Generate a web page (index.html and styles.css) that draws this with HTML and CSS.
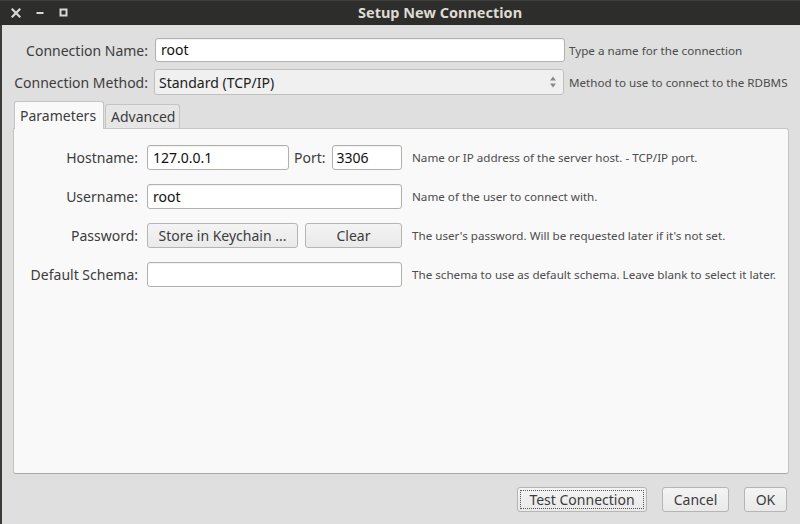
FILE: index.html
```html
<!DOCTYPE html>
<html>
<head>
<meta charset="utf-8">
<link rel="stylesheet" href="styles.css">
</head>
<body>
<div class="window">
  <div class="titlebar">
    <div class="controls">
      <svg class="ctl" width="10" height="10" viewBox="0 0 10 10"><path d="M1.5 1.5 L8.5 8.5 M8.5 1.5 L1.5 8.5" stroke="#d8d8d8" stroke-width="2.2" stroke-linecap="square"/></svg>
      <svg class="ctl" width="10" height="10" viewBox="0 0 10 10"><rect x="1.5" y="4" width="7" height="2" fill="#d8d8d8"/></svg>
      <svg class="ctl" width="10" height="10" viewBox="0 0 10 10"><rect x="1.5" y="1.5" width="6" height="6" fill="none" stroke="#d8d8d8" stroke-width="2"/></svg>
    </div>
    <div class="title">Setup New Connection</div>
  </div>
  <div class="content">
    <div class="topform">
      <label class="lbl">Connection Name:</label>
      <div class="input name-input">root</div>
      <span class="help">Type a name for the connection</span>
      <label class="lbl">Connection Method:</label>
      <div class="select">
        <span>Standard (TCP/IP)</span>
        <svg width="8" height="12" viewBox="0 0 8 12"><path d="M4 0.5 L7 4.5 L1 4.5 Z M4 11.5 L7 7.5 L1 7.5 Z" fill="#8a8a8a"/></svg>
      </div>
      <span class="help">Method to use to connect to the RDBMS</span>
    </div>
    <div class="tabs">
      <div class="tab active">Parameters</div>
      <div class="tab">Advanced</div>
    </div>
    <div class="panel">
      <div class="pform">
        <label class="plbl">Hostname:</label>
        <div class="fieldrow">
          <div class="input host">127.0.0.1</div>
          <span class="portlbl">Port:</span>
          <div class="input port">3306</div>
        </div>
        <span class="help">Name or IP address of the server host. - TCP/IP port.</span>

        <label class="plbl">Username:</label>
        <div class="fieldrow"><div class="input user">root</div></div>
        <span class="help">Name of the user to connect with.</span>

        <label class="plbl">Password:</label>
        <div class="fieldrow">
          <div class="btn keychain">Store in Keychain ...</div>
          <div class="btn clear">Clear</div>
        </div>
        <span class="help">The user's password. Will be requested later if it's not set.</span>

        <label class="plbl">Default Schema:</label>
        <div class="fieldrow"><div class="input user"></div></div>
        <span class="help">The schema to use as default schema. Leave blank to select it later.</span>
      </div>
    </div>
    <div class="actions">
      <div class="btn test"><span class="focus">Test Connection</span></div>
      <div class="btn cancel">Cancel</div>
      <div class="btn ok">OK</div>
    </div>
  </div>
</div>
</body>
</html>
```
FILE: styles.css
```css
* { box-sizing: border-box; }
html, body { margin: 0; padding: 0; }
body {
  width: 800px;
  height: 524px;
  overflow: hidden;
  background: #3c3b37;
  font-family: "Noto Sans", "DejaVu Sans", sans-serif;
  font-size: 14px;
  color: #3c3c3c;
}
.window { width: 800px; height: 524px; display: flex; flex-direction: column; }
.titlebar {
  height: 25px;
  flex: none;
  background: #2d2d2b;
  border-top: 1px solid #3e3e3b;
  display: flex;
  align-items: center;
  position: relative;
}
.controls { display: flex; align-items: center; padding-left: 11px; gap: 14px; margin-top: -1px; }
.ctl { display: block; }
.title {
  position: absolute;
  left: 358px;
  top: 1px;
  font-weight: bold;
  font-size: 14.5px;
  color: #dfdbd2;
}
.content {
  flex: 1;
  background: #dfdfdf;
  border-left: 2px solid #3c3b37;
  padding: 0 11px 0 11px;
  display: flex;
  flex-direction: column;
}
.topform {
  display: grid;
  grid-template-columns: 135px 410px auto;
  column-gap: 6px;
  row-gap: 7px;
  align-items: center;
  padding-top: 13px;
}
.lbl { text-align: right; white-space: nowrap; color: #3c3c3c; }
.input {
  height: 24px;
  background: #fff;
  border: 1px solid #b0b0ae;
  border-radius: 3px;
  padding: 0 5px;
  line-height: 22px;
  color: #101010;
  box-shadow: inset 0 1px 1px rgba(0,0,0,0.06);
}
.name-input { margin-left: 1px; width: 410px; }
.select {
  height: 26px;
  background: #f0f0f0;
  border: 1px solid #c0c0be;
  border-radius: 3px;
  padding: 0 6px 0 4px;
  display: flex;
  align-items: center;
  justify-content: space-between;
  color: #202020;
}
.select svg { display: block; }
.help { font-size: 11.65px; color: #4c4c4c; white-space: nowrap; }
.topform .help { margin-left: -1px; }
.tabs { display: flex; align-items: flex-end; margin-top: 6px; height: 27px; position: relative; z-index: 1; }
.tab {
  height: 24px;
  padding: 0 5px;
  background: #e6e6e6;
  border: 1px solid #c4c4c2;
  border-bottom: none;
  border-radius: 3px 3px 0 0;
  line-height: 23px;
  color: #3c3c3c;
}
.tab.active {
  height: 28px;
  margin-left: 1px;
  width: 90px;
  background: #f9f9f9;
  margin-bottom: -1px;
  line-height: 27px;
}
.tab:not(.active) { width: 75px; margin-left: 1px; }
.panel {
  height: 346px;
  background: #f9f9f9;
  border: 1px solid #c4c4c2;
  border-bottom-color: #a9a9a7;
  border-radius: 0 3px 3px 3px;
  padding-top: 16px;
}
.pform {
  display: grid;
  grid-template-columns: 124px 255px auto;
  column-gap: 9px;
  row-gap: 14px;
  align-items: center;
}
.plbl { text-align: right; white-space: nowrap; color: #3c3c3c; }
.fieldrow { display: flex; align-items: center; height: 25px; width: 255px; }
.fieldrow .input { height: 25px; line-height: 23px; }
.host { width: 142px; flex: none; }
.portlbl { margin-left: 5px; margin-right: 6px; color: #3c3c3c; }
.port { flex: 1; padding-left: 4px; }
.user { width: 255px; }
.pform .help { margin-left: 1px; }
.btn {
  height: 25px;
  border: 1px solid #b5b5b3;
  border-radius: 3px;
  background: linear-gradient(#f4f4f4, #e9e9e9);
  display: flex;
  align-items: center;
  justify-content: center;
  color: #3c3c3c;
}
.keychain { width: 151px; }
.clear { width: 97px; margin-left: 7px; }
.actions {
  display: flex;
  justify-content: flex-end;
  gap: 15px;
  margin-top: 13px;
  padding-right: 2px;
}
.test { width: 130px; padding: 2px; }
.focus {
  display: flex;
  align-items: center;
  justify-content: center;
  width: 100%;
  height: 100%;
  border: 1px dotted #555;
}
.cancel { width: 67px; }
.ok { width: 43px; }
```
